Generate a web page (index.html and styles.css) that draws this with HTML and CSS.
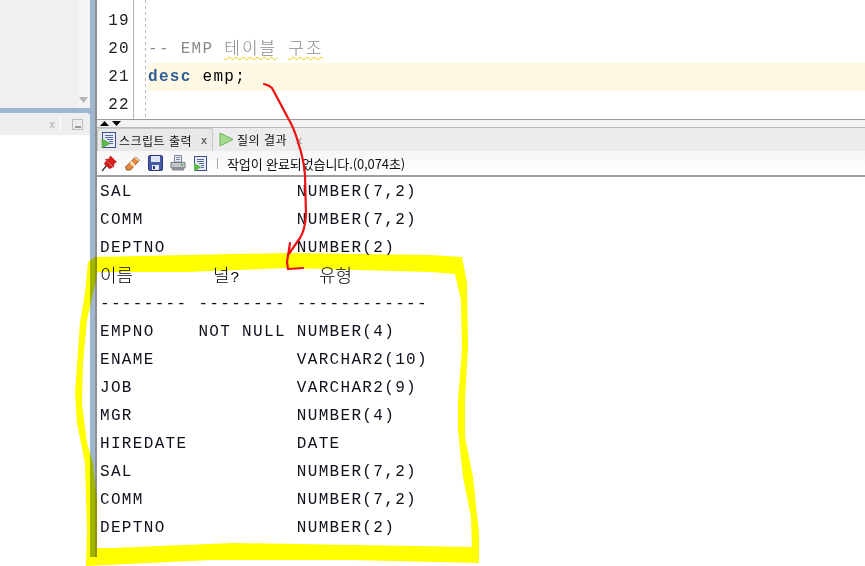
FILE: index.html
```html
<!DOCTYPE html>
<html lang="ko">
<head>
<meta charset="utf-8">
<title>EMP</title>
<link rel="stylesheet" href="styles.css">
</head>
<body>
<div class="app">
  <aside class="side">
    <div class="side-top">
      <div class="side-top-fill"></div>
      <div class="side-scroll"><svg class="scroll-arrow" width="9" height="6" viewBox="0 0 9 6"><path d="M0 0H9L4.5 6Z" fill="#b4b4b4"/></svg></div>
    </div>
    <div class="side-panel">
      <div class="side-head">
        <span class="side-x">x</span>
        <span class="side-sep"></span>
        <span class="side-min"><span class="side-min-bar"></span></span>
      </div>
    </div>
  </aside>
  <main class="main">
    <section class="editor">
      <div class="gutter">
        <div class="ln">19</div>
        <div class="ln">20</div>
        <div class="ln">21</div>
        <div class="ln">22</div>
      </div>
      <div class="fold"></div>
      <div class="code">
        <div class="line"></div>
        <div class="line"><span class="cmt">-- EMP <span class="squig">테이블</span> <span class="squig">구조</span></span></div>
        <div class="line cur"><b class="kw">desc</b> emp;</div>
        <div class="line"></div>
      </div>
    </section>
    <div class="divider">
      <svg width="26" height="7" viewBox="0 0 26 7"><path d="M1 6L5.5 1 10 6ZM13 1H22L17.500 6Z" fill="#000"/></svg>
    </div>
    <div class="tabs">
      <div class="tab active">
        <svg class="ico" width="16" height="18" viewBox="0 0 16 18"><rect x="1.500" y="1.500" width="13" height="15" fill="#e8ecf6" stroke="#3f4f95"/><path d="M4 4.500H12M4 6.500H12M6 8.500H12M8 10.500H12M8 12.500H12" stroke="#5a68a8"/><path d="M1 8L9 12.500 1 17Z" fill="#5cb84a" stroke="#3a8f35" stroke-width=".6"/></svg>
        <span class="tab-label">스크립트 출력</span><span class="tab-x">x</span>
      </div>
      <div class="tab second">
        <svg class="ico" width="15" height="15" viewBox="0 0 15 15"><path d="M1 1L14 7.500 1 14Z" fill="#a4dc8c" stroke="#6eb15c"/></svg>
        <span class="tab-label">질의 결과</span><span class="tab-x faint">x</span>
      </div>
    </div>
    <div class="toolbar">
      <svg class="tool" width="16" height="17" viewBox="0 0 16 17"><path d="M1 16L6 10" stroke="#444" stroke-width="1.500"/><path d="M9.500 1L15.500 7 13 8.500 12.500 12 4.500 4.500 8 4Z" fill="#e01c14" stroke="#8f1410" stroke-width=".6"/><path d="M3 9L5 5.500 12 12.500 8.500 14Z" fill="#d01818"/></svg>
      <svg class="tool" width="17" height="17" viewBox="0 0 16 17"><path d="M1 12L11 2 15 5 6 15 2 15Z" fill="#e8883a" stroke="#7c4e20" stroke-width=".9"/><path d="M10 3L14 6 15 5 11 2Z" fill="#eee0b8"/><path d="M6 7L10 11" stroke="#f6e8c0" stroke-width="2.500"/></svg>
      <svg class="tool" width="15" height="16" viewBox="0 0 15 16"><rect x=".5" y=".5" width="14" height="15" rx="1.500" fill="#4659a8" stroke="#2c3a7c"/><rect x="3" y="1" width="9" height="6" fill="#dfe4f2"/><rect x="4" y="10" width="7" height="5" fill="#e4e7f0"/><rect x="5" y="11" width="2" height="3" fill="#2c3a7c"/></svg>
      <svg class="tool" width="16" height="16" viewBox="0 0 16 16"><path d="M4.500 .5H11.500V7H4.500Z" fill="#e8edf5" stroke="#7c8698"/><path d="M6 2.500H10M6 4.500H10" stroke="#7c8698"/><path d="M1 7.500H15V13H1Z" fill="#c4c8cc" stroke="#757a80"/><rect x="2" y="12" width="12" height="3.500" fill="#8c9096"/><rect x="11" y="9" width="2" height="1.500" fill="#4fae4a"/></svg>
      <svg class="tool" width="15" height="17" viewBox="0 0 15 17"><rect x="1.500" y="1.500" width="12" height="14" fill="#e8ecf6" stroke="#3f4f95"/><path d="M4 4.500H11M4 6.500H11M6 8.500H11M8 10.500H11M8 12.500H11" stroke="#5a68a8"/><path d="M1 8L8.500 12 1 16.500Z" fill="#5cb84a"/></svg>
      <span class="tool-sep"></span>
      <span class="status">작업이 완료되었습니다.(0,074초)</span>
    </div>
    <section class="output">
<pre class="row">SAL               NUMBER(7,2)</pre>
<pre class="row">COMM              NUMBER(7,2)</pre>
<pre class="row">DEPTNO            NUMBER(2)</pre>
<div class="row head"><span>이름</span><span>널<i class="q">?</i></span><span>유형</span></div>
<pre class="row">-------- -------- ------------</pre>
<pre class="row">EMPNO    NOT NULL NUMBER(4)</pre>
<pre class="row">ENAME             VARCHAR2(10)</pre>
<pre class="row">JOB               VARCHAR2(9)</pre>
<pre class="row">MGR               NUMBER(4)</pre>
<pre class="row">HIREDATE          DATE</pre>
<pre class="row">SAL               NUMBER(7,2)</pre>
<pre class="row">COMM              NUMBER(7,2)</pre>
<pre class="row">DEPTNO            NUMBER(2)</pre>
    </section>
  </main>
</div>
<svg class="marker" width="865" height="566" viewBox="0 0 865 566"><path fill-rule="evenodd" fill="#ffff00" d="M95 257L187 255 287 253 430 255 462 257 467 283 468 347 465 400 465 437 473 477 479 533 479 563 353 560 210 560 86 566 87 530 85 463 77 423 75 393 80 323 85 293 88 262ZM96 280L87 320 83 363 82 403 87 443 93 463 97 500 97 548 113 548 233 543 353 545 472 547 471 517 463 477 458 430 458 400 462 350 461 300 455 274 430 272 287 268 187 272 97 272Z"/></svg>
<svg class="pen" width="865" height="566" viewBox="0 0 865 566"><path fill="none" stroke="#f01010" stroke-width="2.200" stroke-linejoin="round" stroke-linecap="round" d="M264 84Q269 85 272 88L288 118Q294 128 298 142Q304 160 305 175L306 215Q305 230 300 238L288 255M290 243L287 262 288 269 303 268"/></svg>
</body>
</html>
```

FILE: styles.css
```css
* { box-sizing: border-box; }
html, body { margin: 0; padding: 0; width: 865px; height: 566px; overflow: hidden; background: #fff; }
.app { display: flex; width: 865px; height: 557px; font-family: "Liberation Mono", monospace; color: #000; }

.side { width: 95px; flex: none; display: flex; flex-direction: column; background: #9fb6d0; padding-right: 5px; }
.side-top { height: 108px; display: flex; background: #f0f0f0; }
.side-top-fill { flex: 1; }
.side-scroll { width: 14px; display: flex; align-items: flex-end; justify-content: center; padding-bottom: 5px; background: #f4f4f4; border-left: 1px solid #ececec; }
.side-panel { flex: 1; margin-top: 5px; background: #fff; border-top-right-radius: 4px; }
.side-head { height: 22px; background: #eeeeee; display: flex; align-items: center; justify-content: flex-end; border-top-right-radius: 4px; padding-right: 7px; }
.side-x { font: bold 10px "Liberation Sans", sans-serif; color: #bcbcbc; margin-right: 5px; }
.side-sep { width: 1px; height: 16px; background: #fff; margin-right: 11px; }
.side-min { width: 11px; height: 11px; border: 1px solid #bdbdbd; display: flex; align-items: flex-end; justify-content: center; padding-bottom: 1px; }
.side-min-bar { width: 6px; height: 2px; background: #999; }

.main { flex: 1; min-width: 0; display: flex; flex-direction: column; border-left: 2px solid #8f8f8f; }

.editor { height: 119px; display: flex; background: #fff; overflow: hidden; }
.gutter { width: 37px; flex: none; border-right: 1px solid #b5b5b5; padding-top: 7px; }
.ln { height: 28px; line-height: 28px; text-align: right; padding-right: 3px; font-size: 16px; letter-spacing: 1.300px; color: #222; }
.fold { width: 12px; flex: none; background: repeating-linear-gradient(to bottom, #b8b8b8 0 3px, transparent 3px 6px) 11px 0 / 1px 100% no-repeat; }
.code { flex: 1; min-width: 0; padding-top: 7px; margin-left: 2px; }
.line { height: 28px; line-height: 28px; font-size: 16px; letter-spacing: 1.300px; white-space: pre; }
.cur { background: #fff8e4; }
.kw { color: #2e5f96; font-weight: bold; }
.cmt { color: #8a8a8a; }
.squig { font-family: "Noto Sans CJK KR", sans-serif; font-size: 17px; line-height: 20px; letter-spacing: 2px; font-weight: 300; vertical-align: -1px; text-decoration: underline wavy #e8c800 1px; text-underline-offset: 2px; }

.divider { height: 9px; flex: none; background: #f2f2f2; border-top: 1px solid #9a9a9a; display: flex; align-items: flex-end; padding-left: 2px; border-bottom: 1px solid #b9b9b9; }
.divider svg { display: block; }

.tabs { height: 23px; flex: none; display: flex; align-items: flex-end; background: #ececec; }
.tab { display: flex; align-items: center; height: 23px; padding: 0 6px 0 3px; font: 12px "Noto Sans CJK KR", sans-serif; color: #111; letter-spacing: .5px; white-space: nowrap; }
.tab.active { width: 116px; background: #e8e8e8; border: 1px solid #c8c8c8; border-bottom: none; border-radius: 3px 3px 0 0; }
.tab.second { padding-left: 6px; }
.ico { flex: none; margin-right: 2px; }
.second .ico { margin-right: 3px; }
.tab-x { font: bold 11px "Liberation Sans", sans-serif; color: #666; margin-left: 9px; }
.tab-x.faint { color: #aaa; margin-left: 9px; }

.toolbar { height: 26px; flex: none; display: flex; align-items: center; padding-left: 4px; gap: 6px; background: linear-gradient(#f6f6f6, #ffffff); border-bottom: 2px solid #9d9d9d; }
.tool { flex: none; }
.tool + .tool { margin-left: 1px; }
.tool-sep { width: 1px; height: 11px; background: #aaa; margin: 0 3px 0 3px; }
.status { font: 13px "Noto Sans CJK KR", sans-serif; color: #111; letter-spacing: -.1px; }

.output { flex: 1; padding: 1px 0 0 3px; overflow: hidden; background: #fff; }
.row { margin: 0; height: 28px; line-height: 28px; font-family: "Liberation Mono", monospace; font-size: 16px; letter-spacing: 1.330px; color: #10101e; white-space: pre; }
.head { display: grid; grid-template-columns: 113px 106px auto; font-family: "Noto Sans CJK KR", sans-serif; font-size: 18px; font-weight: 300; line-height: 24px; letter-spacing: 0; color: #000; }
.q { font-style: normal; font-family: "Liberation Mono", monospace; font-size: 15px; margin-left: 1px; }

.marker { position: absolute; left: 0; top: 0; mix-blend-mode: multiply; pointer-events: none; }
.pen { position: absolute; left: 0; top: 0; pointer-events: none; }
```
